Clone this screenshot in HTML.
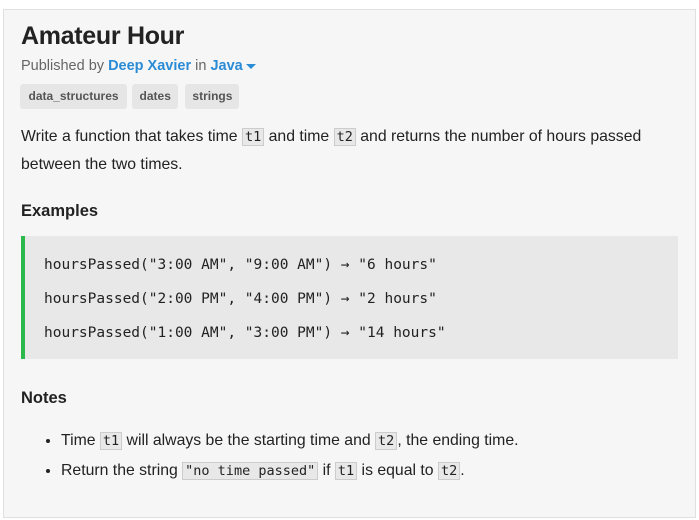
<!DOCTYPE html>
<html><head><style>
body{margin:0;background:#fff;font-family:"Liberation Sans",sans-serif;color:#222;}
.card{position:absolute;left:3px;top:9px;width:691px;height:507px;background:#f6f6f6;border:1px solid #e0e0e0;}
h1{position:absolute;left:17px;top:12px;margin:0;font-size:25px;font-weight:bold;color:#222;letter-spacing:-0.3px}
.pub{position:absolute;left:17px;top:48px;font-size:14.5px;color:#666}
.pub b{color:#2a8bd6;font-weight:bold}
.tri{display:inline-block;width:0;height:0;border-left:5px solid transparent;border-right:5px solid transparent;border-top:5px solid #2a8bd6;vertical-align:middle;margin-left:3px}
.tags{position:absolute;left:16px;top:74px;white-space:nowrap}
.tag{display:inline-block;background:#e6e6e6;border-radius:3px;font-size:12px;color:#555;height:25px;line-height:25px;padding:0 9px;margin-right:5px;font-weight:bold}
.desc{position:absolute;left:17px;top:113px;margin:0;width:648px;font-size:15.8px;line-height:27px}
code{font-family:"DejaVu Sans Mono",monospace;font-size:13.5px;background:#e8e8e8;border:1px solid #ccc;padding:0 2px}
h2{position:absolute;left:17px;margin:0;font-size:16.5px;font-weight:bold}
.ex{position:absolute;left:17px;top:226px;width:653px;height:123px;background:#e8e8e8;border-left:4px solid #2db84b}
.ex div{position:absolute;left:19px;font-family:"DejaVu Sans Mono",monospace;font-size:14.5px;color:#222}
ul{position:absolute;left:17px;top:416px;margin:0;padding-left:40px;font-size:15.8px}
ul li{line-height:29px}
</style></head><body>
<div class="card">
<h1>Amateur Hour</h1>
<div class="pub">Published by <b>Deep Xavier</b> in <b>Java</b><span class="tri"></span></div>
<div class="tags"><span class="tag" style="padding:0 8.5px">data_structures</span><span class="tag" style="padding:0 7.5px;margin-right:7px">dates</span><span class="tag" style="padding:0 7px">strings</span></div>
<p class="desc">Write a function that takes time <code>t1</code> and time <code>t2</code> and returns the number of hours passed between the two times.</p>
<h2 style="top:192px">Examples</h2>
<div class="ex">
<div style="top:21px">hoursPassed("3:00 AM", "9:00 AM") → "6 hours"</div>
<div style="top:55px">hoursPassed("2:00 PM", "4:00 PM") → "2 hours"</div>
<div style="top:89px">hoursPassed("1:00 AM", "3:00 PM") → "14 hours"</div>
</div>
<h2 style="top:379px">Notes</h2>
<ul>
<li>Time <code>t1</code> will always be the starting time and <code>t2</code>, the ending time.</li>
<li>Return the string <code>"no time passed"</code> if <code>t1</code> is equal to <code>t2</code>.</li>
</ul>
</div>
</body></html>
